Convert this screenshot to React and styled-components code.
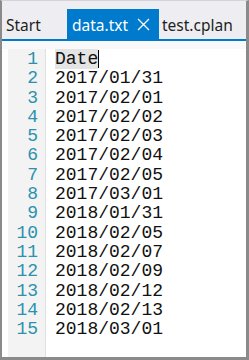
import React from "react";
import styled, { createGlobalStyle } from "styled-components";

const Global = createGlobalStyle`
  html, body { margin: 0; padding: 0; background: #ffffff; }
  * { box-sizing: border-box; }
`;

const Frame = styled.div`
  width: 249px;
  height: 360px;
  display: flex;
  flex-direction: column;
  background: #eeeef2;
  border-style: solid;
  border-color: #8a8a8a;
  border-width: 1px 3px 3px 2px;
  border-top-color: #d4d4d8;
  overflow: hidden;
`;

const TabStrip = styled.div`
  height: 38px;
  display: flex;
  align-items: flex-end;
  flex-shrink: 0;
  border-bottom: 2px solid #007acc;
  box-sizing: content-box;
`;

const Tab = styled.div`
  height: 30px;
  display: flex;
  align-items: center;
  width: ${(p) => p.$width}px;
  padding-left: ${(p) => p.$padLeft}px;
  background: ${(p) => (p.$active ? "#007acc" : "transparent")};
  color: ${(p) => (p.$active ? "#ffffff" : "#1e1e1e")};
  font-family: "Noto Sans", "Open Sans", sans-serif;
  font-size: 15.5px;
  line-height: 30px;
  white-space: nowrap;
`;

const TabLabel = styled.span`
  padding-top: 1px;
`;

const Close = styled.svg`
  margin-left: auto;
  margin-right: 9px;
  flex-shrink: 0;
`;

const Editor = styled.div`
  flex: 1;
  display: flex;
  flex-direction: column;
  background: #ffffff;
`;

const TopBand = styled.div`
  height: 8px;
  flex-shrink: 0;
  background: #f9f9f9;
`;

const Body = styled.div`
  flex: 1;
  display: flex;
`;

const LeftPad = styled.div`
  width: 6px;
  background: #ffffff;
`;

const Gutter = styled.div`
  width: 38px;
  background: #f3f3f3;
  border-right: 1px solid #e0e0e0;
  padding: 1px 7px 0 0;
  text-align: right;
  color: #2b91af;
  font-family: "Liberation Mono", "Courier New", monospace;
  font-size: 18px;
  line-height: 19.3px;
`;

const Code = styled.div`
  flex: 1;
  padding: 1px 0 0 9px;
  color: #111111;
  font-family: "Liberation Mono", "Courier New", monospace;
  font-size: 18px;
  line-height: 19.3px;
`;

const Line = styled.div`
  height: 19.3px;
  white-space: pre;
`;

const Highlight = styled.span`
  position: relative;
  background: #e4e4e4;
  &::after {
    content: "";
    position: absolute;
    right: -1px;
    top: 1px;
    width: 1px;
    height: 18px;
    background: #000000;
  }
`;

const lines = [
  "Date",
  "2017/01/31",
  "2017/02/01",
  "2017/02/02",
  "2017/02/03",
  "2017/02/04",
  "2017/02/05",
  "2017/03/01",
  "2018/01/31",
  "2018/02/05",
  "2018/02/07",
  "2018/02/09",
  "2018/02/12",
  "2018/02/13",
  "2018/03/01",
];

export default function App() {
  return (
    <>
      <Global />
      <Frame>
        <TabStrip>
          <Tab $width={65} $padLeft={4}>
            <TabLabel>Start</TabLabel>
          </Tab>
          <Tab $active $width={92} $padLeft={5}>
            <TabLabel>data.txt</TabLabel>
            <Close width="13" height="13" viewBox="0 0 13 13">
              <path d="M1 1 L12 12 M12 1 L1 12" stroke="#ffffff" strokeWidth="1.3" fill="none" />
            </Close>
          </Tab>
          <Tab $width={80} $padLeft={3}>
            <TabLabel>test.cplan</TabLabel>
          </Tab>
        </TabStrip>
        <Editor>
          <TopBand />
          <Body>
            <LeftPad />
            <Gutter>
              {lines.map((_, i) => (
                <Line key={i}>{i + 1}</Line>
              ))}
            </Gutter>
            <Code>
              {lines.map((l, i) => (
                <Line key={i}>{i === 0 ? <Highlight>{l}</Highlight> : l}</Line>
              ))}
            </Code>
          </Body>
        </Editor>
      </Frame>
    </>
  );
}
